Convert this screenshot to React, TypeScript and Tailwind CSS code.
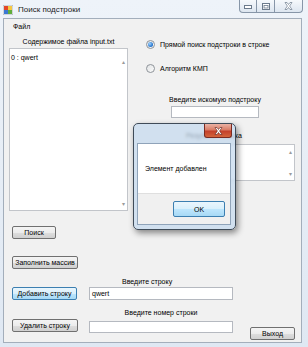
import React from "react";

const btn =
  "flex items-center justify-center rounded-[2px] border border-[#707070] bg-[linear-gradient(to_bottom,#f4f4f4_0%,#ececec_50%,#dedede_51%,#d0d0d0_100%)] text-[7px] text-black whitespace-nowrap";
const btnBlue =
  "flex items-center justify-center rounded-[2px] border border-[#3c7fb1] bg-[linear-gradient(to_bottom,#eaf6fd_0%,#d9f0fc_50%,#bee6fd_51%,#a7d9f5_100%)] text-[7px] text-black whitespace-nowrap";
const tb = "bg-white border border-[#b5b9c0]";

function Radio({ checked }: { checked?: boolean }) {
  return (
    <div className="w-[9px] h-[9px] rounded-full border border-[#8e9399] bg-[linear-gradient(135deg,#e2e4e6,#fbfbfb)] flex items-center justify-center">
      {checked && (
        <div className="w-[5px] h-[5px] rounded-full bg-[radial-gradient(circle_at_35%_35%,#9fd3ff,#1f6fc9_70%,#174f9a)]" />
      )}
    </div>
  );
}

function Arrows({ top, bottom }: { top: string; bottom: string }) {
  return (
    <>
      <span className={`absolute right-[2px] ${top} text-[6px] text-[#9a9a9a]`}>▴</span>
      <span className={`absolute right-[2px] ${bottom} text-[6px] text-[#9a9a9a]`}>▾</span>
    </>
  );
}

export default function App() {
  return (
    <div className="w-[308px] h-[347px] relative overflow-hidden bg-[linear-gradient(to_bottom,#eef3f9,#dfe8f3)] font-['Liberation_Sans',Arial,sans-serif] text-[7px] leading-none text-black">
      {/* title bar */}
      <div className="h-[18px] flex items-start">
        <svg width="10" height="10" viewBox="0 0 10 10" className="ml-[3px] mt-[5px]">
          <rect x="0" y="0" width="10" height="10" fill="#f4f4f4" stroke="#7a8a9a" strokeWidth="0.6" />
          <rect x="1" y="1" width="4" height="4" fill="#e2462a" />
          <rect x="5" y="1" width="4" height="4" fill="#f5c842" />
          <rect x="1" y="5" width="4" height="4" fill="#3a78d4" />
          <rect x="5" y="5" width="4" height="4" fill="#5fae3c" />
        </svg>
        <span className="ml-[5px] mt-[6px] text-[8px] text-[#1b1b1b]">Поиск подстроки</span>
        <div className="ml-auto mr-[5px] h-[13px] flex rounded-b-[4px] border border-t-0 border-[#8796a8] overflow-hidden bg-[linear-gradient(to_bottom,#f6f9fc,#dde6f0)]">
          <div className="w-[16px] flex items-center justify-center">
            <svg width="8" height="6" viewBox="0 0 8 6">
              <rect x="0.5" y="2.5" width="7" height="3" fill="#fff" stroke="#6c7b8c" />
            </svg>
          </div>
          <div className="w-[18px] border-l border-[#8796a8] flex items-center justify-center">
            <svg width="8" height="7" viewBox="0 0 8 7">
              <rect x="0.5" y="0.5" width="7" height="6" fill="#fff" stroke="#6c7b8c" />
              <rect x="2" y="2.5" width="4" height="2.5" fill="none" stroke="#6c7b8c" strokeWidth="0.8" />
            </svg>
          </div>
          <div className="w-[28px] border-l border-[#8796a8] flex items-center justify-center">
            <svg width="9" height="8" viewBox="0 0 9 8">
              <path d="M1 0.5 L3 0.5 L4.5 2.5 L6 0.5 L8 0.5 L5.6 4 L8 7.5 L6 7.5 L4.5 5.5 L3 7.5 L1 7.5 L3.4 4 Z" fill="#fff" stroke="#6c7b8c" strokeWidth="0.7" />
            </svg>
          </div>
        </div>
      </div>

      {/* client area */}
      <div className="ml-[3px] w-[299px] h-[325px] border border-[#a3aebb] bg-[#f1f1f1] flex flex-col">
        {/* menu */}
        <div className="h-[15px] flex items-center pl-[9px]">Файл</div>

        {/* main two columns */}
        <div className="flex">
          <div className="ml-[5px] w-[119px] flex flex-col">
            <div className="h-[14px] flex items-center justify-center whitespace-nowrap">
              Содержимое файла input.txt
            </div>
            <div className={`relative h-[163px] ${tb} border-[#c2c5ca]`}>
              <div className="pl-[1px] pt-[5px]">0 : qwert</div>
              <Arrows top="top-[10px]" bottom="bottom-[3px]" />
            </div>
            <div className={`mt-[15px] ml-[3px] w-[44px] h-[13px] ${btn}`}>Поиск</div>
            <div className={`mt-[17px] ml-[3px] w-[66px] h-[13px] ${btn}`}>Заполнить массив</div>
          </div>

          <div className="ml-[18px] flex flex-col">
            <div className="mt-[4px] h-[12px] flex items-center gap-[5px] whitespace-nowrap">
              <Radio checked />
              <span>Прямой поиск подстроки в строке</span>
            </div>
            <div className="mt-[12px] h-[12px] flex items-center gap-[5px] whitespace-nowrap">
              <Radio />
              <span>Алгоритм КМП</span>
            </div>
            <div className="mt-[19px] ml-[25px] w-[88px] h-[12px] flex items-center justify-center whitespace-nowrap">
              Введите искомую подстроку
            </div>
            <div className={`mt-[1px] ml-[25px] w-[88px] h-[12px] ${tb}`} />
            <div className="mt-[11px] h-[12px] pl-[40px] flex items-center whitespace-nowrap">
              Результат поиска
            </div>
            <div className={`relative mt-[3px] ml-[4px] w-[145px] h-[37px] ${tb} border-[#c2c5ca]`}>
              <Arrows top="top-[4px]" bottom="bottom-[3px]" />
            </div>
          </div>
        </div>

        {/* bottom area */}
        <div className="mt-[6px] h-[12px] pl-[118px] flex items-center whitespace-nowrap">Введите строку</div>
        <div className="h-[13px] flex">
          <div className={`ml-[8px] w-[65px] h-[13px] ${btnBlue}`}>Добавить строку</div>
          <div className={`ml-[12px] w-[144px] h-[13px] ${tb} flex items-center pl-[2px]`}>qwert</div>
        </div>
        <div className="mt-[6px] ml-[85px] w-[144px] h-[13px] flex items-center justify-center whitespace-nowrap">
          Введите номер строки
        </div>
        <div className="flex items-start">
          <div className={`ml-[8px] w-[66px] h-[13px] ${btn}`}>Удалить строку</div>
          <div className={`ml-[11px] mt-[2px] w-[144px] h-[12px] ${tb}`} />
          <div className={`ml-[17px] mt-[8px] w-[45px] h-[13px] ${btn}`}>Выход</div>
        </div>
      </div>

      {/* modal dialog */}
      <div className="absolute left-[133px] top-[123px] w-[103px] h-[107px] rounded-[5px] border border-[#3f4b58] bg-[#c6daee]/75 backdrop-blur-[1.5px] shadow-[2px_3px_6px_rgba(0,0,0,0.45)] flex flex-col">
        <div className="h-[19px] relative">
          <div className="absolute right-[3px] top-0 w-[28px] h-[14px] rounded-b-[3px] border border-t-0 border-[#7a2b22] bg-[linear-gradient(to_bottom,#eab3a5_0%,#d97c66_45%,#c4402b_55%,#d3653c_100%)] flex items-center justify-center">
            <svg width="9" height="8" viewBox="0 0 9 8">
              <path d="M1 0.5 L3 0.5 L4.5 2.5 L6 0.5 L8 0.5 L5.6 4 L8 7.5 L6 7.5 L4.5 5.5 L3 7.5 L1 7.5 L3.4 4 Z" fill="#fff" stroke="#5a1e18" strokeWidth="0.6" />
            </svg>
          </div>
        </div>
        <div className="ml-[3px] w-[94px] h-[82px] border border-[#8fa3b9] flex flex-col">
          <div className="h-[49px] bg-white flex items-center pl-[7px] whitespace-nowrap">Элемент добавлен</div>
          <div className="flex-1 bg-[#f0f0f0] border-t border-[#dfdfdf] flex justify-end items-start">
            <div className={`mt-[7px] mr-[5px] w-[52px] h-[16px] ${btnBlue}`}>OK</div>
          </div>
        </div>
      </div>
    </div>
  );
}
